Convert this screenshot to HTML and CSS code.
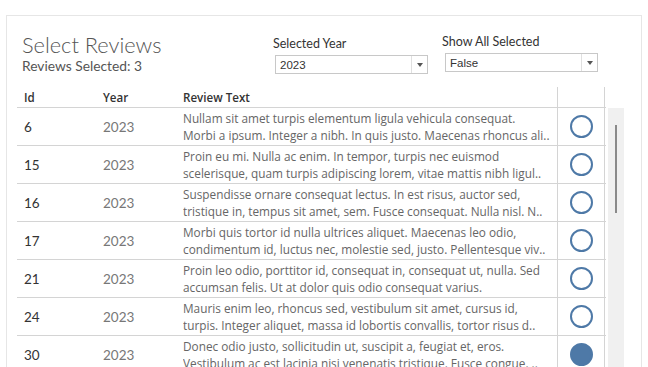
FILE: index.html
```html
<!DOCTYPE html>
<html lang="en">
<head>
    <meta charset="UTF-8">
    <title>Select Reviews</title>
    <link rel="stylesheet" href="styles.css">
</head>
<body>
    <div class="card">
        <div class="top">
            <div class="title-block">
                <h1 class="title">Select Reviews</h1>
                <p class="subtitle">Reviews Selected: 3</p>
            </div>
            <div class="filter filter-year">
                <label>Selected Year</label>
                <div class="select">
                    <span class="value">2023</span>
                    <span class="arrow"></span>
                </div>
            </div>
            <div class="filter filter-all">
                <label>Show All Selected</label>
                <div class="select">
                    <span class="value">False</span>
                    <span class="arrow"></span>
                </div>
            </div>
        </div>

        <div class="table-wrap">
            <div class="table">
                <div class="row head">
                    <div class="cell id">Id</div>
                    <div class="cell year">Year</div>
                    <div class="cell text">Review Text</div>
                    <div class="cell pick"></div>
                </div>
                <div class="row">
                    <div class="cell id">6</div>
                    <div class="cell year">2023</div>
                    <div class="cell text"><span>Nullam sit amet turpis elementum ligula vehicula consequat.</span><span>Morbi a ipsum. Integer a nibh. In quis justo. Maecenas rhoncus ali..</span></div>
                    <div class="cell pick"><span class="dot"></span></div>
                </div>
                <div class="row">
                    <div class="cell id">15</div>
                    <div class="cell year">2023</div>
                    <div class="cell text"><span>Proin eu mi. Nulla ac enim. In tempor, turpis nec euismod</span><span>scelerisque, quam turpis adipiscing lorem, vitae mattis nibh ligul..</span></div>
                    <div class="cell pick"><span class="dot"></span></div>
                </div>
                <div class="row">
                    <div class="cell id">16</div>
                    <div class="cell year">2023</div>
                    <div class="cell text"><span>Suspendisse ornare consequat lectus. In est risus, auctor sed,</span><span>tristique in, tempus sit amet, sem. Fusce consequat. Nulla nisl. N..</span></div>
                    <div class="cell pick"><span class="dot"></span></div>
                </div>
                <div class="row">
                    <div class="cell id">17</div>
                    <div class="cell year">2023</div>
                    <div class="cell text"><span>Morbi quis tortor id nulla ultrices aliquet. Maecenas leo odio,</span><span>condimentum id, luctus nec, molestie sed, justo. Pellentesque viv..</span></div>
                    <div class="cell pick"><span class="dot"></span></div>
                </div>
                <div class="row">
                    <div class="cell id">21</div>
                    <div class="cell year">2023</div>
                    <div class="cell text"><span>Proin leo odio, porttitor id, consequat in, consequat ut, nulla. Sed</span><span>accumsan felis. Ut at dolor quis odio consequat varius.</span></div>
                    <div class="cell pick"><span class="dot"></span></div>
                </div>
                <div class="row">
                    <div class="cell id">24</div>
                    <div class="cell year">2023</div>
                    <div class="cell text"><span>Mauris enim leo, rhoncus sed, vestibulum sit amet, cursus id,</span><span>turpis. Integer aliquet, massa id lobortis convallis, tortor risus d..</span></div>
                    <div class="cell pick"><span class="dot"></span></div>
                </div>
                <div class="row">
                    <div class="cell id">30</div>
                    <div class="cell year">2023</div>
                    <div class="cell text"><span>Donec odio justo, sollicitudin ut, suscipit a, feugiat et, eros.</span><span>Vestibulum ac est lacinia nisi venenatis tristique. Fusce congue. ..</span></div>
                    <div class="cell pick"><span class="dot on"></span></div>
                </div>
            </div>
            <div class="scrollbar">
                <div class="thumb"></div>
            </div>
        </div>
    </div>
</body>
</html>
```

FILE: styles.css
```css
* {
    margin: 0;
    padding: 0;
    box-sizing: border-box;
}
body {
    font-family: 'Lato', 'Open Sans', sans-serif;
    background: #fff;
    color: #333;
    overflow: hidden;
}
.card {
    margin: 15px 0 0 6px;
    width: 636px;
    height: 352px;
    border: 1px solid #e6e6e6;
    border-bottom: none;
    overflow: hidden;
}
.top {
    display: flex;
    height: 71px;
}
.title-block {
    padding: 16px 0 0 15px;
    width: 266px;
}
.title {
    font-size: 21.8px;
    font-weight: 300;
    color: #555;
    line-height: 25px;
}
.subtitle {
    font-size: 13.8px;
    color: #555;
    line-height: 17px;
}
.filter label {
    display: block;
    font-size: 12.5px;
    color: #333;
    line-height: 16px;
}
.filter-year {
    padding: 20px 0 0 0;
    width: 169px;
}
.filter-all {
    padding: 18px 0 0 0;
}
.filter .select {
    display: flex;
    align-items: center;
    width: 153px;
    height: 19px;
    border: 1px solid #c8c8c8;
    margin: 3px 0 0 2px;
    background: #fff;
}
.filter-all .select {
    margin-left: 3px;
}
.select .value {
    flex: 1;
    font-size: 11.5px;
    color: #333;
    padding-left: 4px;
    font-family: 'Liberation Sans', sans-serif;
}
.select .arrow {
    width: 16px;
    height: 100%;
    border-left: 1px solid #e0e0e0;
    display: flex;
    align-items: center;
    justify-content: center;
}
.select .arrow::after {
    content: '';
    border-left: 3.5px solid transparent;
    border-right: 3.5px solid transparent;
    border-top: 4px solid #555;
}
.table-wrap {
    display: flex;
    padding-left: 10px;
}
.table {
    width: 589px;
}
.row {
    display: grid;
    grid-template-columns: 79px 80px 381px 48px;
    height: 38px;
    border-bottom: 1px solid #d4d4d4;
}
.row.head {
    height: 21px;
    align-items: center;
}
.cell {
    display: flex;
    align-items: center;
    padding-left: 7px;
    font-size: 13.5px;
    white-space: nowrap;
    overflow: hidden;
}
.cell.id {
    color: #333;
}
.cell.year {
    color: #777;
}
.cell.text {
    flex-direction: column;
    align-items: flex-start;
    justify-content: center;
    font-family: 'Open Sans', 'Lato', sans-serif;
    font-size: 11.8px;
    color: #666;
    line-height: 17px;
    padding-right: 2px;
}
.cell.text span {
    display: block;
    width: 100%;
    overflow: hidden;
    text-overflow: ellipsis;
}
.row.head .cell {
    font-family: 'Open Sans', sans-serif;
    font-weight: 600;
    color: #333;
    font-size: 11.6px;
    height: 100%;
    padding-top: 1px;
    flex-direction: row;
    align-items: center;
    justify-content: flex-start;
}
.cell.pick {
    border-left: 1px solid #d4d4d4;
    border-right: 1px solid #d4d4d4;
    justify-content: center;
    padding-left: 0;
}
.dot {
    width: 23px;
    height: 23px;
    border-radius: 50%;
    border: 2px solid #4e79a7;
}
.dot.on {
    background: #4e79a7;
}
.scrollbar {
    margin: 21px 0 0 2px;
    width: 16px;
    background: #f0f0f0;
    display: flex;
    justify-content: center;
    padding-top: 17px;
}
.thumb {
    width: 2px;
    height: 88px;
    background: #8a8a8a;
}
```
